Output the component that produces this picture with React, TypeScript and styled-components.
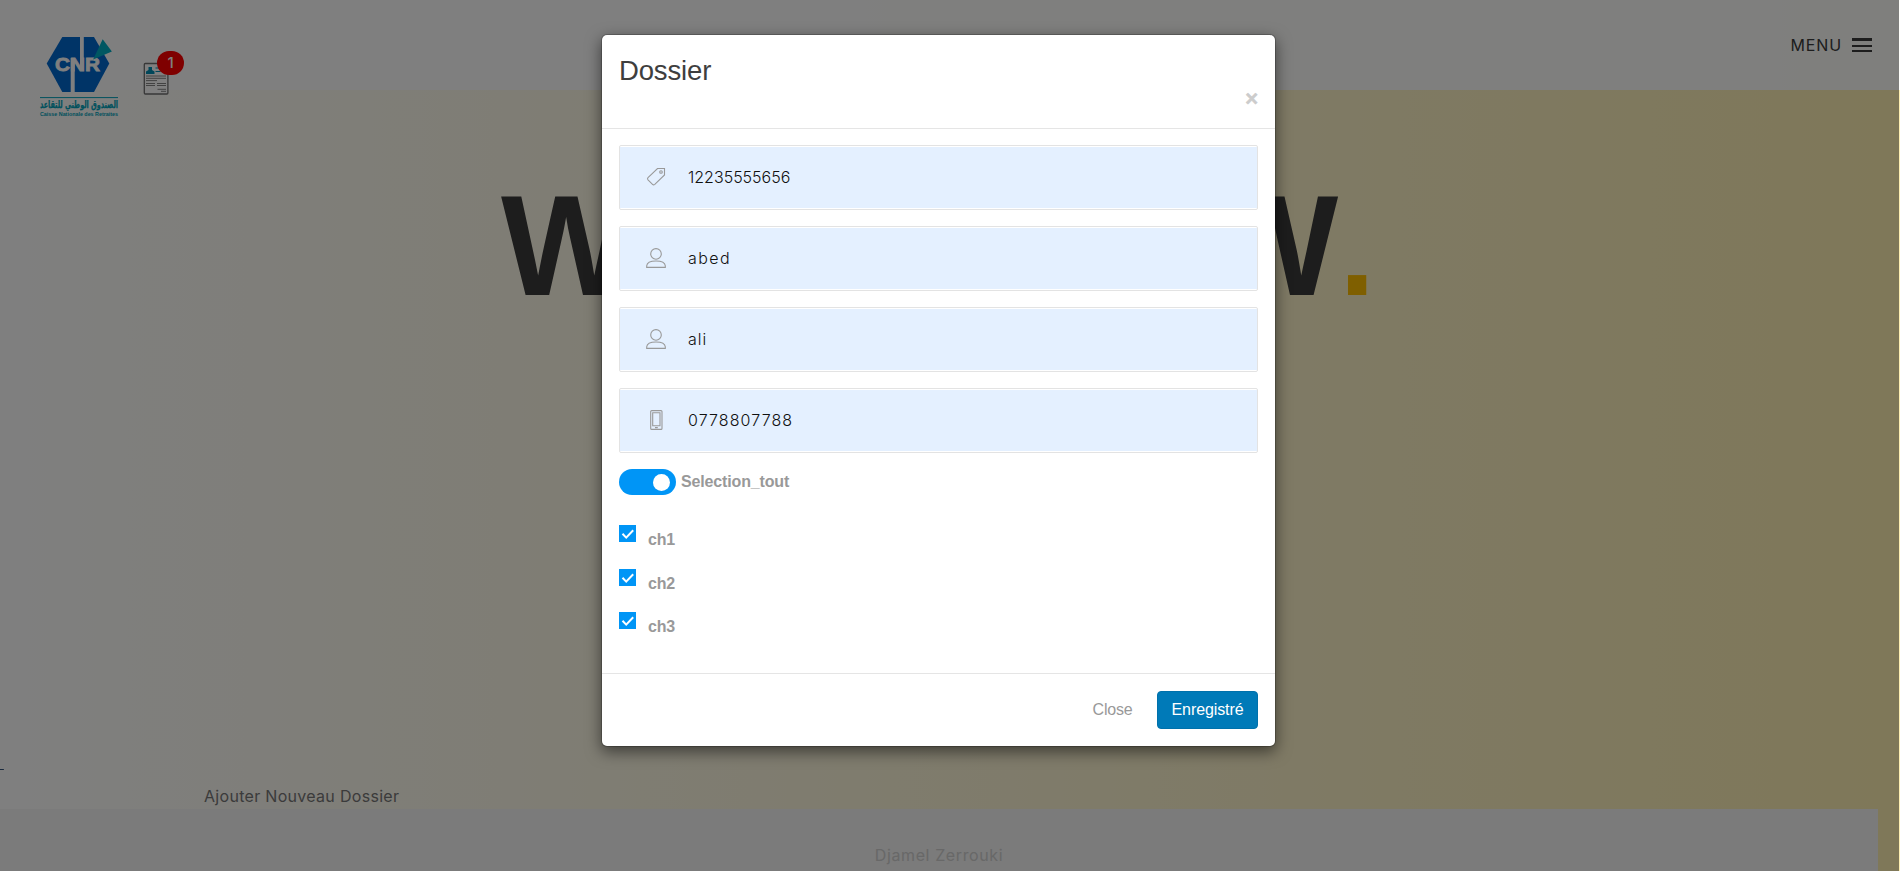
import React from "react";
import styled, { createGlobalStyle } from "styled-components";

const GlobalStyle = createGlobalStyle`
  * { box-sizing: border-box; }
  html, body { margin: 0; padding: 0; height: 871px; overflow: hidden; }
  body { font-family: "Liberation Sans", Arial, sans-serif; }
`;
const brandFont = `Inter, "Open Sans", sans-serif`;

const Page = styled.div`
  width: 1900px;
  height: 871px;
  overflow: hidden;
  display: flex;
  flex-direction: column;
  background: linear-gradient(to right, #ffffff, #fff0b2);
  position: relative;
`;
const Header = styled.header`
  flex: none;
  height: 90px;
  padding: 0 28px 0 36px;
  display: flex;
  justify-content: space-between;
  align-items: flex-start;
  background: rgba(255, 255, 255, 0.95);
`;
const Brand = styled.div`
  display: flex;
  align-items: flex-start;
  padding-top: 33px;
`;
const Notice = styled.div`
  position: relative;
  margin: 29px 0 0 22px;
  height: 34px;
`;
const Badge = styled.span`
  position: absolute;
  left: 15px;
  top: -11px;
  width: 27px;
  height: 24px;
  border-radius: 12px;
  background: #ff0000;
  color: #fff;
  font: 500 15px/23px ${brandFont};
  text-align: center;
`;
const MenuButton = styled.div`
  display: flex;
  align-items: center;
  gap: 10px;
  padding-top: 35px;
  color: #3a3a3a;
  font: 400 16px/20px ${brandFont};
  letter-spacing: 0.85px;
`;
const Bars = styled.span`
  display: grid;
  grid-template-rows: 3px 2px 2px;
  row-gap: 3.5px;
  width: 20px;
  i { background: #3a3a3a; }
`;
const Hero = styled.main`
  flex: 1;
  display: flex;
  flex-direction: column;
`;
const Title = styled.h1`
  margin: 88px 0 0 501px;
  font: bold 138px/138px "Liberation Sans", Arial, sans-serif;
  color: #3a3a3a;
  white-space: nowrap;
  letter-spacing: -0.85px;
  transform: scaleY(1.042);
  transform-origin: 0 118px;
  span { color: #ffbf00; margin-left: 2px; font-size: 129px; line-height: 1; }
`;
const LinkMark = styled.a`
  margin-top: auto;
  height: 16px;
  width: 5px;
  font: 14px/16px "Liberation Sans", Arial, sans-serif;
  text-decoration: underline;
  color: #35557c;
  white-space: pre;
`;
const AddLink = styled.div`
  padding: 14px 0 2px 204px;
  font: 400 16px/22px ${brandFont};
  color: #777;
  letter-spacing: 0.3px;
`;
const Footer = styled.footer`
  flex: none;
  width: 1878px;
  height: 62px;
  padding-top: 35px;
  background: #f6f6f6;
  text-align: center;
  font: 400 16px/22px ${brandFont};
  color: #d0d0d0;
  letter-spacing: 0.6px;
`;
const Overlay = styled.div`
  position: absolute;
  inset: 0 1px 0 0;
  background: rgba(0, 0, 0, 0.5);
  display: flex;
  align-items: flex-start;
  padding: 34px 0 0 601px;
`;
const Dialog = styled.section`
  width: 675px;
  background: #fff;
  background-clip: padding-box;
  border: 1px solid rgba(0, 0, 0, 0.2);
  border-radius: 6px;
  box-shadow: 0 5px 15px rgba(0, 0, 0, 0.5);
`;
const DialogHeader = styled.div`
  height: 94px;
  padding: 20px 17px 0;
  border-bottom: 1px solid #e5e5e5;
  display: flex;
  flex-direction: column;
`;
const DialogTitle = styled.h4`
  margin: 0;
  font-weight: 400;
  font-size: 27.5px;
  line-height: 32px;
  letter-spacing: -0.15px;
  color: #3e3e3e;
`;
const CloseIcon = styled.button`
  align-self: flex-end;
  border: 0;
  padding: 0;
  background: none;
  font: bold 22px/24px "Liberation Sans", Arial, sans-serif;
  color: #ccc;
  -webkit-text-stroke: 0.5px #ccc;
`;
const DialogBody = styled.div`
  height: 544px;
  padding: 16px 17px 0;
`;
const Field = styled.div`
  height: 65px;
  margin-bottom: 16px;
  padding: 1px 0;
  border: 1px solid #e3e3e3;
  border-radius: 2px;
`;
const FieldInner = styled.div`
  height: 61px;
  display: flex;
  align-items: center;
  padding-left: 26px;
  background: #e4f0ff;
  svg { flex: none; width: 20px; height: 20px; margin-bottom: 2px; }
`;
const Value = styled.span<{ $track: number }>`
  margin: 0 0 1px 22px;
  font: 300 16px/22px ${brandFont};
  letter-spacing: ${(p) => p.$track}px;
  color: #111;
`;
const SwitchRow = styled.div`
  display: flex;
  align-items: center;
  gap: 5px;
  height: 26px;
`;
const Label = styled.span`
  font-weight: bold;
  font-size: 16px;
  line-height: 20px;
  letter-spacing: -0.15px;
  color: #999;
`;
const Switch = styled.span`
  width: 57px;
  height: 26px;
  border-radius: 13px;
  background: #0095f6;
  display: flex;
  align-items: center;
  justify-content: flex-end;
  padding-right: 6px;
  &::after { content: ""; width: 17px; height: 17px; border-radius: 50%; background: #fff; }
`;
const Checks = styled.div`
  padding-top: 30px;
`;
const CheckRow = styled.div`
  display: flex;
  gap: 12px;
  height: 43.5px;
  ${Label} { margin-top: 5px; }
  svg { width: 17px; height: 17px; }
`;
const DialogFooter = styled.div`
  height: 73px;
  border-top: 1px solid #e5e5e5;
  padding: 17px 17px 0;
  display: flex;
  justify-content: flex-end;
`;
const Button = styled.button<{ $primary?: boolean }>`
  height: 38px;
  width: ${(p) => (p.$primary ? 101 : 89)}px;
  padding: 0;
  border: 1px solid ${(p) => (p.$primary ? "#0071ab" : "transparent")};
  border-radius: 4px;
  background: ${(p) => (p.$primary ? "#007ab8" : "transparent")};
  color: ${(p) => (p.$primary ? "#fff" : "#999")};
  font: 16px/20px "Liberation Sans", Arial, sans-serif;
  letter-spacing: ${(p) => (p.$primary ? -0.1 : -0.2)}px;
`;

const Logo = () => (
  <svg width="84" height="86" viewBox="36 33 84 86" overflow="visible">
    <path d="M62.3 37H94l15.3 26.5L94 92H62.3L46.7 63.5z" fill="#0068cf" />
    <path d="M80 37h3.8v33.7H80zM70.7 58h4v34h-4z" fill="#fff" />
    <text x="55" y="71" fontSize="18.5" fontWeight="bold" fontFamily="Liberation Sans, Arial, sans-serif" fill="#fff" stroke="#fff" strokeWidth=".8" textLength="45" lengthAdjust="spacingAndGlyphs">CNR</text>
    <path d="M102.7 39.3l9.2 12.2-18.8 8z" fill="#00aec4" />
    <path d="M40 97.6h78" stroke="#00a2ba" strokeWidth="1" />
    <text x="79" y="107.5" textAnchor="middle" direction="rtl" fontSize="10.5" fontWeight="bold" fontFamily="DejaVu Sans, sans-serif" fill="#00a2ba" stroke="#00a2ba" strokeWidth=".25" textLength="78" lengthAdjust="spacingAndGlyphs">الصندوق الوطني للتقاعد</text>
    <text x="40" y="116" fontSize="5.2" fontWeight="bold" fontFamily="Liberation Sans, Arial, sans-serif" fill="#00a2ba" textLength="78" lengthAdjust="spacingAndGlyphs">Caisse Nationale des Retraites</text>
  </svg>
);

const DocumentIcon = () => (
  <svg width="27" height="34" viewBox="142 62 27 34">
    <rect x="144.3" y="63.5" width="23.6" height="30.5" rx="1" fill="#fff" stroke="#707070" strokeWidth="1.3" />
    <path d="M146 74v-2.5l2.5-1.5v-3h3.5v3l2.5 1.5V74z" fill="#008eb4" />
    <path d="M155.5 68h5M155.5 71.5h5" stroke="#008eb4" />
    <path d="M146 76h20M146 78.3h20M146 80.6h11M146 83.5h9M146 85.5h9M157 83.5h9M157 85.5h9M157.5 89.3h8.5M161 91.3h5" stroke="#777" strokeWidth=".9" />
  </svg>
);

const TagIcon = () => (
  <svg viewBox="0 0 20 20" fill="none" stroke="#999" strokeWidth="1.1">
    <path d="M11.5 1.5H18.5V8L8.8 17.3Q7.6 18.4 6.5 17.3L2 12.8Q1 11.7 2 10.6z" />
    <circle cx="15" cy="5" r="1.3" />
  </svg>
);
const UserIcon = () => (
  <svg viewBox="0 0 20 20" fill="none" stroke="#999" strokeWidth="1.1">
    <ellipse cx="10" cy="5.9" rx="5.3" ry="5.3" />
    <path d="M.7 19.4V17.8C1 14.7 5 13 10 13s9 1.7 9.3 4.8v1.6z" />
  </svg>
);
const PhoneIcon = () => (
  <svg viewBox="0 0 20 20" fill="none" stroke="#999" strokeWidth="1.1">
    <rect x="4.7" y=".6" width="11.3" height="18.8" rx="1" />
    <path d="M6.7 2.7h7.3v13H6.7zM9 17.6h2.8" />
  </svg>
);
const CheckIcon = () => (
  <svg viewBox="0 0 17 17">
    <path d="M0 0h17v17H0z" fill="#0095f6" />
    <path d="M3.5 8.8l3.7 3.8 7-7.4" fill="none" stroke="#fff" strokeWidth="2" />
  </svg>
);

const fields = [
  { icon: <TagIcon />, value: "12235555656", track: 0 },
  { icon: <UserIcon />, value: "abed", track: 1.4 },
  { icon: <UserIcon />, value: "ali", track: 1 },
  { icon: <PhoneIcon />, value: "0778807788", track: 1.1 },
];

export default function App() {
  return (
    <>
      <GlobalStyle />
      <Page>
        <Header>
          <Brand>
            <Logo />
            <Notice>
              <DocumentIcon />
              <Badge>1</Badge>
            </Notice>
          </Brand>
          <MenuButton>
            MENU
            <Bars><i /><i /><i /></Bars>
          </MenuButton>
        </Header>
        <Hero>
          <Title>WORKFLOW<span>.</span></Title>
          <LinkMark>&nbsp;</LinkMark>
          <AddLink>Ajouter Nouveau Dossier</AddLink>
        </Hero>
        <Footer>Djamel Zerrouki</Footer>
        <Overlay>
          <Dialog>
            <DialogHeader>
              <DialogTitle>Dossier</DialogTitle>
              <CloseIcon>×</CloseIcon>
            </DialogHeader>
            <DialogBody>
              {fields.map((f) => (
                <Field key={f.value}>
                  <FieldInner>
                    {f.icon}
                    <Value $track={f.track}>{f.value}</Value>
                  </FieldInner>
                </Field>
              ))}
              <SwitchRow>
                <Switch />
                <Label>Selection_tout</Label>
              </SwitchRow>
              <Checks>
                {["ch1", "ch2", "ch3"].map((name) => (
                  <CheckRow key={name}>
                    <CheckIcon />
                    <Label>{name}</Label>
                  </CheckRow>
                ))}
              </Checks>
            </DialogBody>
            <DialogFooter>
              <Button>Close</Button>
              <Button $primary>Enregistré</Button>
            </DialogFooter>
          </Dialog>
        </Overlay>
      </Page>
    </>
  );
}
